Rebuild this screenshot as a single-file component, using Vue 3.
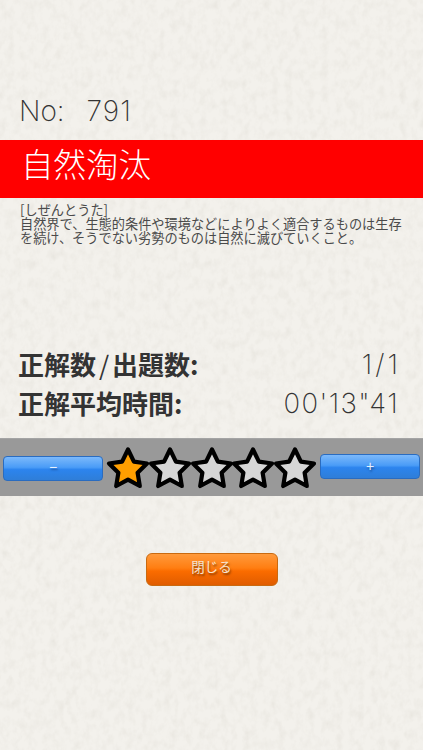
<script setup>
const stars = [
  { id: 1, on: true },
  { id: 2, on: false },
  { id: 3, on: false },
  { id: 4, on: false },
  { id: 5, on: false }
]
</script>

<template>
  <main class="page">
    <svg class="paper" width="423" height="750" aria-hidden="true">
      <filter id="grain" x="0" y="0" width="100%" height="100%">
        <feTurbulence type="fractalNoise" baseFrequency="0.14 0.1" numOctaves="4" seed="11" />
        <feColorMatrix values="0 0 0 0 0.5  0 0 0 0 0.47  0 0 0 0 0.4  0.2 0.2 0 0 -0.17" />
      </filter>
      <rect width="423" height="750" fill="#f3f1ec" />
      <rect width="423" height="750" filter="url(#grain)" />
    </svg>

    <div class="content">
      <div class="number"><span>No:</span><span class="num">791</span></div>
      <h1 class="band">自然淘汰</h1>
      <p class="definition">[しぜんとうた]<br />自然界で、生態的条件や環境などによりよく適合するものは生存<br />を続け、そうでない劣勢のものは自然に滅びていくこと。</p>

      <div class="stat first">
        <b>正解数<i>/</i>出題数:</b>
        <span>1/1</span>
      </div>
      <div class="stat second">
        <b>正解平均時間:</b>
        <span>00'13"41</span>
      </div>

      <div class="rating">
        <button class="blue minus" type="button"><span>−</span></button>
        <div class="stars">
          <svg v-for="star in stars" :key="star.id" class="star" viewBox="0 0 44 44">
            <path
              d="M22 3.5 L27.9 15.6 L41 17.5 L31.6 26.7 L33.8 40 L22 33.7 L10.2 40 L12.4 26.7 L3 17.5 L16.1 15.6 Z"
              :fill="star.on ? '#ff9f00' : '#d6d6d6'"
              stroke="#000"
              stroke-width="4.2"
              stroke-linejoin="round"
            />
          </svg>
        </div>
        <button class="blue plus" type="button"><span>+</span></button>
      </div>

      <div class="close-row">
        <button class="close" type="button">閉じる</button>
      </div>
    </div>
  </main>
</template>

<style scoped>
.page {
  position: relative;
  width: 423px;
  height: 750px;
  overflow: hidden;
  font-family: "Noto Sans CJK JP", "Noto Sans", sans-serif;
  color: #333;
}
.paper {
  position: absolute;
  inset: 0;
}
.content {
  position: relative;
  display: flex;
  flex-direction: column;
  padding-top: 93px;
}
.number {
  display: flex;
  gap: 22px;
  height: 36px;
  margin-bottom: 11px;
  padding-left: 19px;
  font-family: Inter, "Noto Sans", sans-serif;
  font-size: 28px;
  font-weight: 250;
  line-height: 36px;
  color: #333;
}
.num {
  letter-spacing: 1px;
}
.band {
  height: 58px;
  margin: 0;
  padding-left: 21px;
  background: #ff0000;
  color: #fff;
  font-size: 32.5px;
  font-weight: 300;
  line-height: 46px;
}
.definition {
  height: 47px;
  margin: 5px 0 0;
  padding-left: 20px;
  font-size: 13.2px;
  font-weight: 400;
  line-height: 14px;
  color: #4a4a4a;
  white-space: nowrap;
}
.stat {
  display: flex;
  justify-content: space-between;
  align-items: center;
  height: 39px;
  padding: 0 25px 0 18px;
}
.stat.first {
  margin-top: 94px;
}
.stat b {
  font-size: 26px;
  font-weight: 700;
  color: #333;
}
.stat b i {
  display: inline-block;
  width: 16px;
  font-style: normal;
  font-weight: 400;
  text-align: center;
}
.stat span {
  margin-right: -1px;
  font-family: Inter, "Noto Sans", sans-serif;
  font-size: 27.5px;
  font-weight: 250;
  letter-spacing: 1.4px;
  color: #333;
}
.stat.first span {
  margin-right: -3px;
  letter-spacing: 3px;
}
.rating {
  display: flex;
  align-items: center;
  height: 58px;
  margin-top: 16px;
  padding: 0 3px;
  background: #999;
  border-top: 1px solid #a4a4a4;
  box-sizing: border-box;
}
.blue {
  flex: none;
  width: 100px;
  height: 25px;
  padding: 0;
  border: 1px solid #2a6cc0;
  border-radius: 4px;
  background: linear-gradient(#7cb9fb 0%, #4a9cf7 45%, #2c84ee 55%, #2f7ed8 100%);
  color: #e8f2ff;
  font-family: "Liberation Sans", sans-serif;
  font-size: 14px;
  line-height: 20px;
  text-shadow: 1px 2px 2px rgba(20, 50, 100, 0.6);
}
.minus {
  margin-top: 1px;
}
.minus span {
  display: block;
  transform: translateY(-1px);
}
.plus {
  margin-top: -3px;
}
.stars {
  display: flex;
  flex: 1;
  justify-content: center;
}
.star {
  width: 44px;
  height: 44px;
  margin: 0 -1.2px;
}
.close-row {
  display: flex;
  justify-content: center;
  margin-top: 57px;
}
.close {
  width: 132px;
  height: 33px;
  padding: 0 0 7px;
  border: 1px solid #c96a10;
  border-radius: 6px;
  background: linear-gradient(#ff9a3c 0%, #ff7e12 45%, #fb6c00 55%, #e05c00 100%);
  color: #f6e4d0;
  font-family: "Noto Sans CJK JP", sans-serif;
  font-size: 13.5px;
  text-shadow: 1px 2px 2px rgba(90, 40, 0, 0.7);
}
</style>
